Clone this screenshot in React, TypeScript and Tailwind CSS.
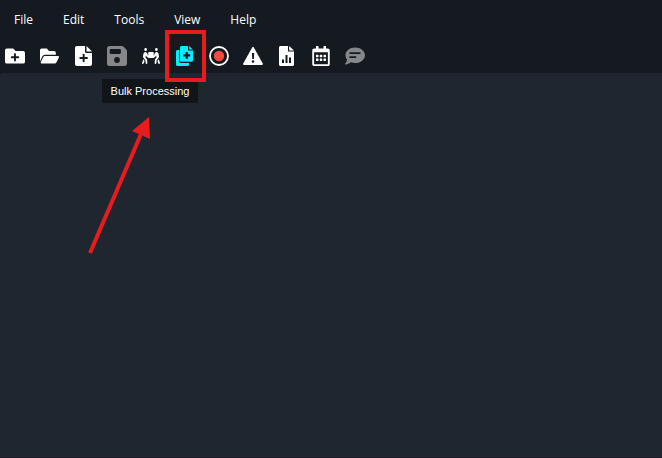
import type { ReactNode } from "react";
import { FaFolderPlus, FaFolderOpen, FaPeopleCarry, FaRegCalendarAlt } from "react-icons/fa";

const MENUS = ["File", "Edit", "Tools", "View", "Help"];

function Glyph({ children }: { children: ReactNode }) {
  return (
    <svg className="h-6 w-6" viewBox="0 0 24 24" fill="currentColor" aria-hidden="true">
      {children}
    </svg>
  );
}

function FilePlusIcon() {
  return (
    <Glyph>
      <path
        fillRule="evenodd"
        d="M6 2h8v5.500c0 .8.6 1.400 1.400 1.400H21V20c0 1.100-.9 2-2 2H6c-1.100 0-2-.9-2-2V4c0-1.100.9-2 2-2zm5.700 8v3.100H8.600V15h3.100v3.100h1.900V15h3.100v-1.900h-3.100V10z"
      />
      <path d="M15.500 2 21 7.500h-5.500z" />
    </Glyph>
  );
}

function SaveIcon() {
  return (
    <Glyph>
      <path
        fillRule="evenodd"
        d="M4.500 2h12.300c.7 0 1.300.3 1.800.7l2.700 2.700c.4.500.7 1.100.7 1.800v12.300c0 1.400-1.100 2.500-2.500 2.500h-15A2.500 2.500 0 0 1 2 19.500v-15C2 3.100 3.100 2 4.500 2zm1.300 2.900c-.6 0-1.100.5-1.100 1.100v2.800c0 .6.500 1.100 1.100 1.100h9c.6 0 1.100-.5 1.100-1.100V6c0-.6-.5-1.100-1.100-1.100zM12 13.100a2.900 2.900 0 1 0 0 5.800 2.900 2.900 0 0 0 0-5.800z"
      />
    </Glyph>
  );
}

function BulkIcon() {
  return (
    <Glyph>
      <path d="M3 7.500C3 6.700 3.700 6 4.500 6H6v11c0 1.100.9 2 2 2h8v1.500c0 .8-.7 1.500-1.500 1.500h-10C3.700 22 3 21.300 3 20.500z" />
      <path
        fillRule="evenodd"
        d="M8.500 2H15v4.500h5v9.700c0 .8-.7 1.500-1.500 1.500h-10c-.8 0-1.500-.7-1.500-1.500V3.500C7 2.700 7.700 2 8.500 2zm4.100 5.900v2.300h-2.300v2.200h2.300v2.300h2.200v-2.300h2.300v-2.200h-2.300V7.900z"
      />
      <path d="M16.200 2 19.800 5.500h-3.600z" />
    </Glyph>
  );
}

function RecordIcon() {
  return (
    <Glyph>
      <circle cx="12" cy="12" r="9" fill="none" stroke="currentColor" strokeWidth="1.8" />
      <circle cx="12" cy="12" r="5.2" className="fill-[#f44b40]" />
    </Glyph>
  );
}

function WarningIcon() {
  return (
    <Glyph>
      <path
        fillRule="evenodd"
        d="M11.200 3.400a.95.95 0 0 1 1.600 0l9.100 16.300c.3.600-.1 1.300-.8 1.300H2.900c-.7 0-1.100-.7-.8-1.300zM10.900 9l.3 6h1.700l.3-6zm1.100 7.200a1.300 1.300 0 1 0 0 2.600 1.300 1.300 0 0 0 0-2.600z"
      />
    </Glyph>
  );
}

function ReportIcon() {
  return (
    <Glyph>
      <path
        fillRule="evenodd"
        d="M5.500 2H13v5.500h6v13c0 .8-.7 1.500-1.500 1.500h-12c-.8 0-1.500-.7-1.500-1.500v-17C4 2.700 4.700 2 5.500 2zM7 15.500V19h2v-3.500zM10.500 11v8h2v-8zm3.500 2.500V19h2v-5.500z"
      />
      <path d="M14.200 2 19 6.500h-4.800z" />
    </Glyph>
  );
}

function CommentIcon() {
  return (
    <Glyph>
      <path
        fillRule="evenodd"
        d="M12.200 3.500c5.400 0 9.800 3.500 9.800 7.800s-4.400 7.800-9.800 7.800c-1.500 0-3-.3-4.300-.8-1.500 1.200-3.500 2.200-5.500 2.200-.4 0-.6-.5-.3-.8 1.100-1.200 1.800-2.600 2-4a6.900 6.900 0 0 1-1.700-4.400c0-4.300 4.400-7.800 9.800-7.800zM7.100 8.200a.9.900 0 0 0 0 1.800h9.700a.9.900 0 0 0 0-1.800zm0 4a.9.900 0 0 0 0 1.800h5.400a.9.900 0 0 0 0-1.800z"
      />
    </Glyph>
  );
}

const TOOLS: { label: string; icon: ReactNode; disabled?: boolean }[] = [
  { label: "New Folder", icon: <FaFolderPlus className="h-5 w-5" /> },
  { label: "Open", icon: <FaFolderOpen className="h-5 w-[19px]" preserveAspectRatio="none" /> },
  { label: "New File", icon: <FilePlusIcon /> },
  { label: "Save", icon: <SaveIcon />, disabled: true },
  { label: "Transfer", icon: <FaPeopleCarry className="h-4 w-[18px]" preserveAspectRatio="none" /> },
  { label: "Bulk Processing", icon: <BulkIcon /> },
  { label: "Record", icon: <RecordIcon /> },
  { label: "Alerts", icon: <WarningIcon /> },
  { label: "Report", icon: <ReportIcon /> },
  { label: "Calendar", icon: <FaRegCalendarAlt className="h-5 w-5" /> },
  { label: "Comments", icon: <CommentIcon />, disabled: true },
];

function Callout() {
  return (
    <>
      <span
        role="tooltip"
        className="absolute top-[35px] right-[-1px] flex h-6 w-24 items-center justify-center bg-[#111418] font-['Liberation_Sans',Arial,sans-serif] text-[11px] whitespace-nowrap text-white"
      >
        Bulk Processing
      </span>
      <span className="pointer-events-none absolute -top-3.5 -left-2 h-[52px] w-[41px] border-4 border-[#e81c1c]" />
      <svg
        className="pointer-events-none absolute top-[72px] -left-[88px] h-[140px] w-[70px]"
        viewBox="0 0 70 140"
        aria-hidden="true"
      >
        <path d="M5 137 56 18" className="stroke-[#e81c1c]" strokeWidth="4" />
        <path d="M64 1 65 23 47 15z" className="fill-[#e81c1c]" />
      </svg>
    </>
  );
}

export default function App() {
  return (
    <div className="flex min-h-screen flex-col overflow-hidden bg-[#151a21] font-['Open_Sans','Noto_Sans',sans-serif] text-white">
      {/* Menu bar */}
      <nav className="flex h-10 items-center gap-[30px] px-3.5 text-xs">
        {MENUS.map((name) => (
          <button key={name} type="button">
            {name}
          </button>
        ))}
      </nav>

      {/* Toolbar */}
      <div role="toolbar" className="flex gap-2.5 px-[3px] pt-1 pb-[5px]">
        {TOOLS.map(({ label, icon, disabled }) => {
          const active = label === "Bulk Processing";
          return (
            <div key={label} className="relative h-6">
              <button
                type="button"
                aria-label={label}
                disabled={disabled}
                className={`flex h-6 w-6 items-center justify-center ${
                  active ? "text-[#00f0ff]" : disabled ? "text-[#85878b]" : "text-white"
                }`}
              >
                {icon}
              </button>
              {active && <Callout />}
            </div>
          );
        })}
      </div>

      {/* Workspace */}
      <main className="flex-1 rounded-tl border-b border-[#1c1b28] bg-[#20262f]" />
    </div>
  );
}
